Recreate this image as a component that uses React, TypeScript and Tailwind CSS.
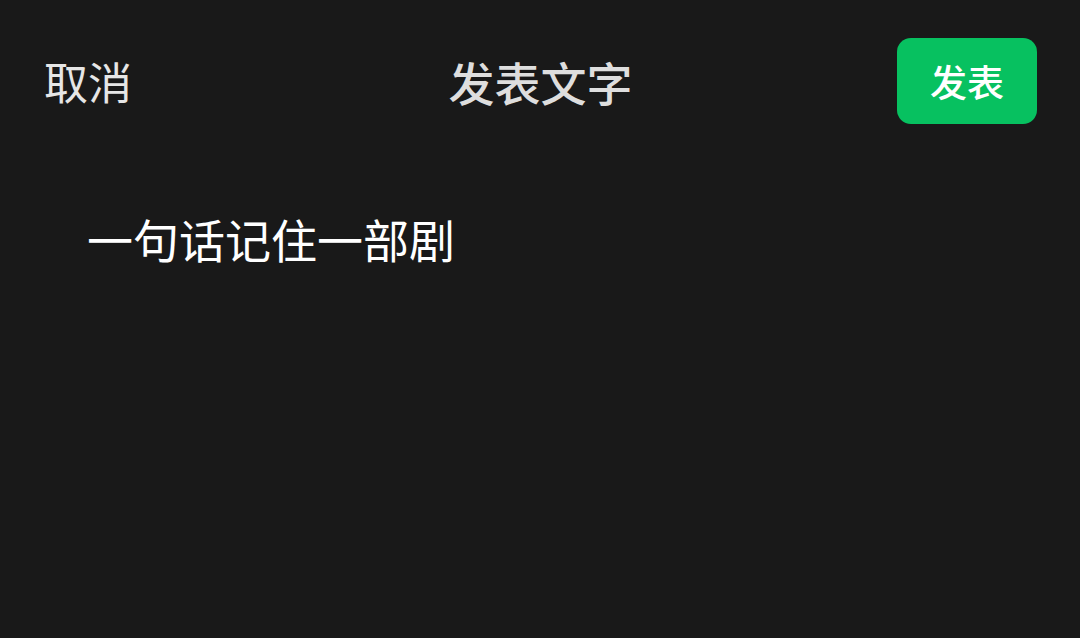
export default function App() {
  return (
    <div
      className="w-[1080px] h-[638px] bg-[#191919] overflow-hidden"
      style={{ fontFamily: '"Noto Sans CJK SC", "Noto Sans", sans-serif' }}
    >
      <header className="grid grid-cols-[1fr_auto_1fr] items-center pt-[38px] pl-[44px] pr-[43px]">
        <button className="justify-self-start text-[44px] leading-none text-[#e6e6e6]">取消</button>
        <h1 className="text-[46px] leading-none font-medium text-[#dedede]">发表文字</h1>
        <button className="justify-self-end w-[140px] h-[86px] rounded-[14px] bg-[#07c160] text-[37px] font-medium text-white leading-none">
          发表
        </button>
      </header>

      <main className="pl-[87px] pt-[84px]">
        <p className="text-[46px] leading-[60px] text-white">一句话记住一部剧</p>
      </main>
    </div>
  );
}
